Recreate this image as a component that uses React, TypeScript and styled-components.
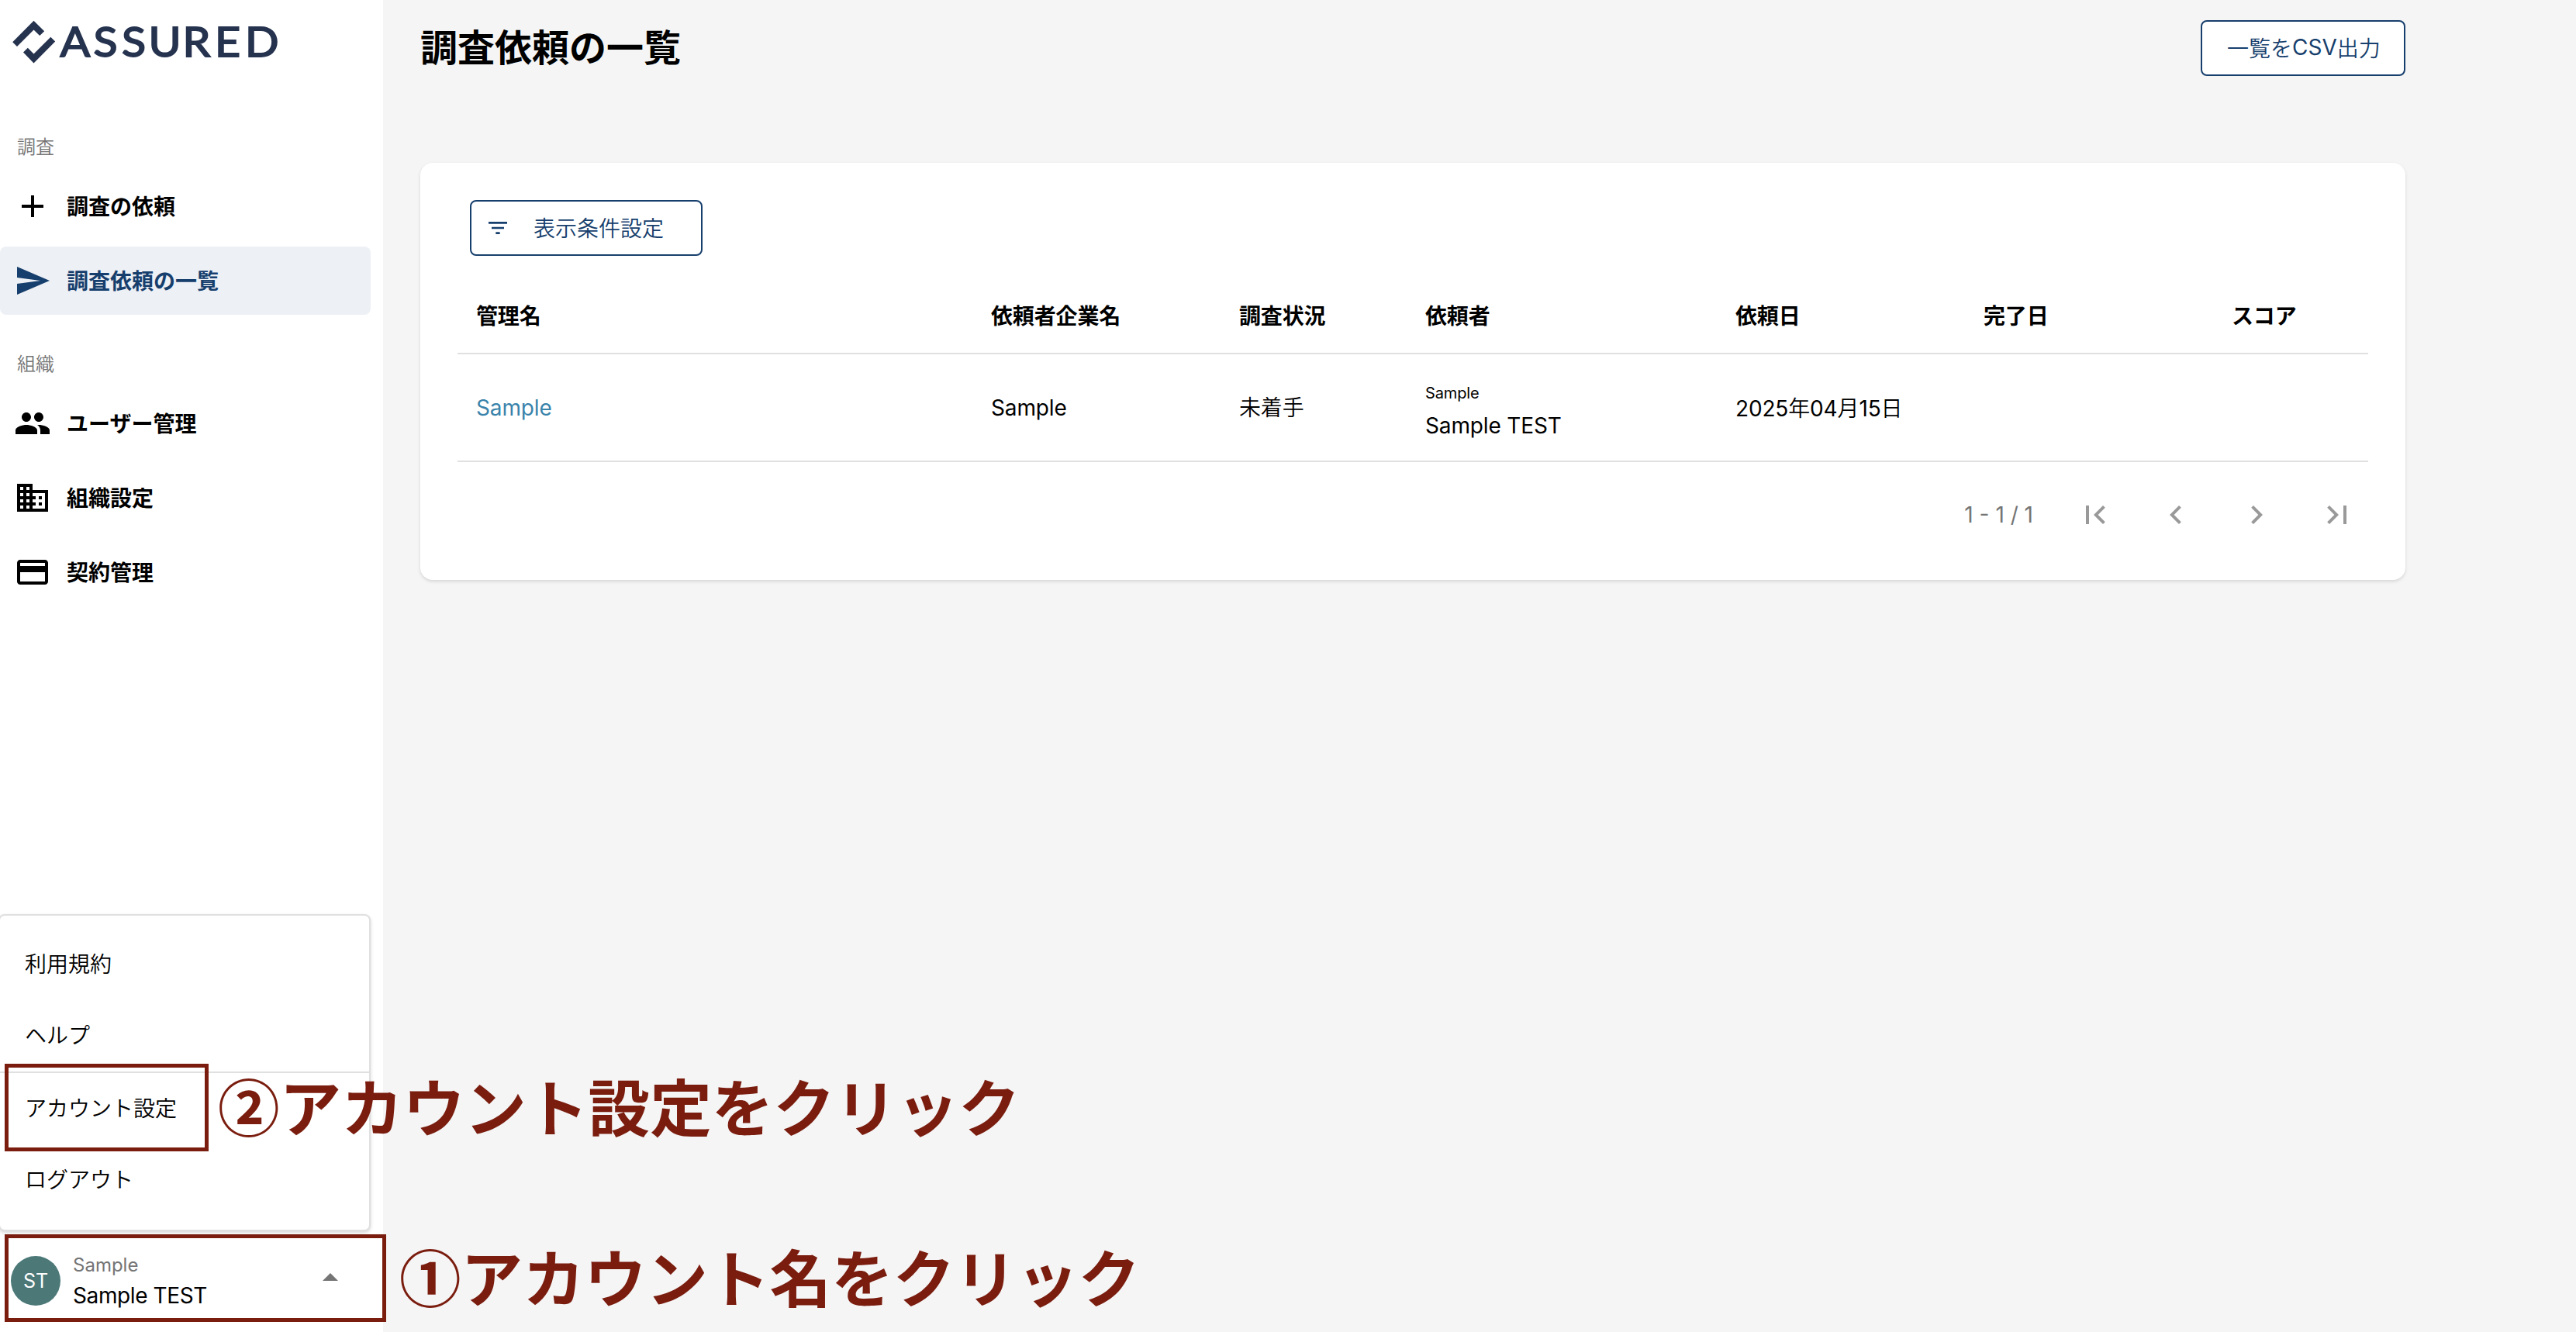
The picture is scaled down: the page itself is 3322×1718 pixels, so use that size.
import React from "react";
import styled, { createGlobalStyle } from "styled-components";
import {
  MdAdd,
  MdSend,
  MdPeople,
  MdBusiness,
  MdCreditCard,
  MdFilterList,
  MdFirstPage,
  MdChevronLeft,
  MdChevronRight,
  MdLastPage,
  MdArrowDropUp,
} from "react-icons/md";

const NAVY = "#173f6d";
const RED = "#7a1d0f";
const LINE = "#e0e0e0";

const GlobalStyle = createGlobalStyle`
  * { box-sizing: border-box; }
  body {
    margin: 0;
    background: #f5f5f5;
    color: #000;
    font-family: Inter, "Noto Sans CJK JP", sans-serif;
    font-size: 28px;
  }
`;

const Page = styled.div`
  position: relative;
  display: flex;
  width: 3322px;
  height: 1718px;
  overflow: hidden;
`;

const Sidebar = styled.aside`
  display: flex;
  flex-direction: column;
  flex: none;
  width: 494px;
  background: #fff;
`;

const LogoLink = styled.div`
  height: 126px;
  svg { display: block; }
`;

const SectionLabel = styled.h2`
  margin: 0;
  padding: 0 22px;
  height: 64px;
  line-height: 64px;
  font-size: 24px;
  font-weight: 350;
  color: #757575;
`;

const NavList = styled.nav`
  display: flex;
  flex-direction: column;
  gap: 8px;
  width: 478px;
`;

const NavSection = styled.section`
  padding-top: 32px;
`;

const NavItem = styled.a<{ $active?: boolean }>`
  display: flex;
  align-items: center;
  gap: 20px;
  height: 88px;
  padding-left: 18px;
  border-radius: 8px;
  font-weight: 700;
  color: ${(p) => (p.$active ? NAVY : "#000")};
  background: ${(p) => (p.$active ? "#edf0f5" : "transparent")};
  svg { width: 48px; height: 48px; }
`;

const NavText = styled.span`
  padding-bottom: 2px;
`;

const Account = styled.div`
  display: flex;
  align-items: center;
  height: 132px;
  margin-top: auto;
  padding: 0 44px 0 14px;
`;

const Avatar = styled.div`
  flex: none;
  width: 64px;
  height: 64px;
  border-radius: 50%;
  background: #4c7878;
  color: #fff;
  font-size: 25px;
  line-height: 65px;
  text-align: center;
`;

const AccountText = styled.div`
  flex: 1;
  margin-left: 16px;
  letter-spacing: -0.4px;
`;

const AccountOrg = styled.div`
  font-size: 24px;
  line-height: 38px;
  letter-spacing: 0;
  color: #757575;
`;

const AccountName = styled.div`
  line-height: 40px;
`;

const Caret = styled(MdArrowDropUp)`
  width: 48px;
  height: 48px;
  margin-top: -8px;
  color: #757575;
`;

const Menu = styled.div`
  position: absolute;
  left: -2px;
  top: 1179px;
  width: 480px;
  height: 409px;
  padding-top: 17px;
  border: 2px solid ${LINE};
  border-radius: 8px;
  background: #fff;
  box-shadow: 0 2px 4px rgba(0, 0, 0, 0.16);
`;

const MenuItem = styled.div<{ $divided?: boolean }>`
  height: ${(p) => (p.$divided ? 94 : 92)}px;
  padding-left: 32px;
  line-height: 92px;
  font-weight: 350;
  border-top: ${(p) => (p.$divided ? `2px solid ${LINE}` : "none")};
`;

const Main = styled.main`
  flex: none;
  width: 2608px;
  padding: 26px 0 0 48px;
`;

const Header = styled.header`
  display: flex;
  align-items: center;
  justify-content: space-between;
  height: 72px;
`;

const Title = styled.h1`
  margin: 0;
  font-size: 48px;
  line-height: 72px;
  font-weight: 700;
`;

const OutlineButton = styled.button<{ $width: number; $indent: number }>`
  display: flex;
  align-items: center;
  width: ${(p) => p.$width}px;
  height: 72px;
  padding: 0 0 3px ${(p) => p.$indent}px;
  border: 2px solid ${NAVY};
  border-radius: 8px;
  background: #fff;
  color: ${NAVY};
  font: inherit;
  white-space: nowrap;
  svg { width: 32px; height: 32px; margin: 3px 30px 0 0; }
`;

const LightText = styled.span`
  font-weight: 350;
`;

const Card = styled.section`
  height: 538px;
  margin-top: 112px;
  padding: 48px 48px 0;
  border-radius: 16px;
  background: #fff;
  box-shadow: 0 2px 4px rgba(0, 0, 0, 0.13);
`;

const Toolbar = styled.div`
  padding-left: 16px;
`;

const Row = styled.div<{ $height: number; $head?: boolean }>`
  display: grid;
  grid-template-columns: 664px 320px 240px 400px 320px 320px 200px;
  align-items: center;
  height: ${(p) => p.$height}px;
  padding-top: ${(p) => (p.$head ? 26 : 0)}px;
  border-bottom: 2px solid ${LINE};
  font-weight: ${(p) => (p.$head ? 700 : 400)};
`;

const Cell = styled.div<{ $lift?: number }>`
  padding: 0 0 ${(p) => p.$lift ?? 0}px 24px;
  white-space: nowrap;
  letter-spacing: -0.15px;
`;

const Link = styled.a`
  color: #3983ab;
`;

const SmallText = styled.div`
  padding-top: 6px;
  font-size: 20px;
  line-height: 40px;
`;

const PersonName = styled.div`
  line-height: 44px;
`;

const Pagination = styled.div`
  display: flex;
  justify-content: flex-end;
  align-items: center;
  height: 136px;
  padding-right: 16px;
  gap: 56px;
  color: #999;
  svg { width: 48px; height: 48px; }
`;

const PageCount = styled.span`
  color: #757575;
`;

const Highlight = styled.div<{ $top: number; $width: number }>`
  position: absolute;
  left: 6px;
  top: ${(p) => p.$top}px;
  width: ${(p) => p.$width}px;
  height: 113px;
  border: 5px solid ${RED};
`;

const Note = styled.div<{ $left: number; $top: number }>`
  position: absolute;
  left: ${(p) => p.$left}px;
  top: ${(p) => p.$top}px;
  font-family: "Noto Sans CJK JP", sans-serif;
  font-size: 79.6px;
  line-height: 100px;
  font-weight: 700;
  color: ${RED};
  white-space: nowrap;
`;

const Logo = () => (
  <svg width="380" height="108" viewBox="0 0 380 108" fill="#26334f">
    <path d="M43.5 26.7 57.2 40.3 51.2 46 43.5 38.6 22 60 16.2 54.2Z" />
    <path d="M43.5 81.4 30 67.6 35.8 61.8 43.5 69.5 65.3 47.8 71.2 53.6Z" />
    <text
      x="71.8 111.6 145.4 177.3 218 256.6 292.6"
      y="73"
      transform="scale(1.08 1)"
      fontFamily="Lato, sans-serif"
      fontWeight="400"
      fontSize="53"
      stroke="#26334f"
      strokeWidth="1.8"
    >
      ASSURED
    </text>
  </svg>
);

const columns = ["管理名", "依頼者企業名", "調査状況", "依頼者", "依頼日", "完了日", "スコア"];

export default function App() {
  return (
    <Page>
      <GlobalStyle />
      <Sidebar>
        <LogoLink>
          <Logo />
        </LogoLink>
        <NavSection>
          <SectionLabel>調査</SectionLabel>
          <NavList>
            <NavItem><MdAdd /><NavText>調査の依頼</NavText></NavItem>
            <NavItem $active><MdSend /><NavText>調査依頼の一覧</NavText></NavItem>
          </NavList>
        </NavSection>
        <NavSection>
          <SectionLabel>組織</SectionLabel>
          <NavList>
            <NavItem><MdPeople /><NavText>ユーザー管理</NavText></NavItem>
            <NavItem><MdBusiness /><NavText>組織設定</NavText></NavItem>
            <NavItem><MdCreditCard /><NavText>契約管理</NavText></NavItem>
          </NavList>
        </NavSection>
        <Account>
          <Avatar>ST</Avatar>
          <AccountText>
            <AccountOrg>Sample</AccountOrg>
            <AccountName>Sample TEST</AccountName>
          </AccountText>
          <Caret />
        </Account>
      </Sidebar>

      <Main>
        <Header>
          <Title>調査依頼の一覧</Title>
          <OutlineButton $width={264} $indent={32}>
            <LightText>一覧を</LightText>CSV<LightText>出力</LightText>
          </OutlineButton>
        </Header>
        <Card>
          <Toolbar>
            <OutlineButton $width={300} $indent={18}>
              <MdFilterList />
              <LightText>表示条件設定</LightText>
            </OutlineButton>
          </Toolbar>
          <Row $height={127} $head>
            {columns.map((name) => (
              <Cell key={name}>{name}</Cell>
            ))}
          </Row>
          <Row $height={139}>
            <Cell><Link>Sample</Link></Cell>
            <Cell>Sample</Cell>
            <Cell $lift={4}><LightText>未着手</LightText></Cell>
            <Cell>
              <SmallText>Sample</SmallText>
              <PersonName>Sample TEST</PersonName>
            </Cell>
            <Cell $lift={2}>
              2025<LightText>年</LightText>04<LightText>月</LightText>15<LightText>日</LightText>
            </Cell>
            <Cell />
            <Cell />
          </Row>
          <Pagination>
            <PageCount>1 - 1 / 1</PageCount>
            <MdFirstPage />
            <MdChevronLeft />
            <MdChevronRight />
            <MdLastPage />
          </Pagination>
        </Card>
      </Main>

      <Menu>
        <MenuItem>利用規約</MenuItem>
        <MenuItem>ヘルプ</MenuItem>
        <MenuItem $divided>アカウント設定</MenuItem>
        <MenuItem>ログアウト</MenuItem>
      </Menu>

      <Highlight $top={1372} $width={263} />
      <Highlight $top={1592} $width={492} />
      <Note $left={281} $top={1375}>②アカウント設定をクリック</Note>
      <Note $left={515} $top={1595}>①アカウント名をクリック</Note>
    </Page>
  );
}
